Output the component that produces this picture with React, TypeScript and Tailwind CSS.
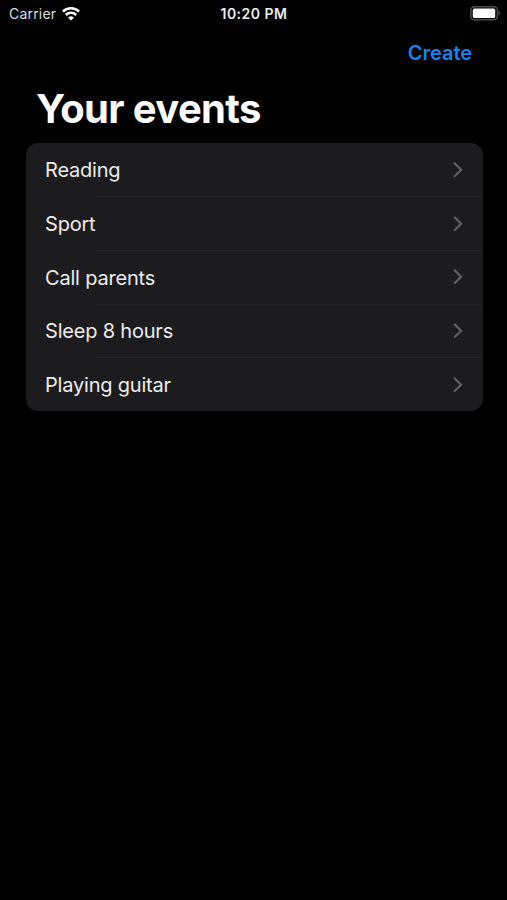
import React from "react";

type TEvent = {
  id: number;
  title: string;
};

const events: TEvent[] = [
  { id: 1, title: "Reading" },
  { id: 2, title: "Sport" },
  { id: 3, title: "Call parents" },
  { id: 4, title: "Sleep 8 hours" },
  { id: 5, title: "Playing guitar" },
];

const WifiIcon = () => (
  <svg width="18" height="14" viewBox="0 0 18 14" fill="none" stroke="#fff" strokeWidth="2.5">
    <path d="M0.9 4.7a11.5 11.5 0 0 1 16.2 0" />
    <path d="M3.8 8a7.4 7.4 0 0 1 10.4 0" />
    <path d="M9 13.6 6.1 10.7a4.1 4.1 0 0 1 5.8 0Z" fill="#fff" stroke="none" />
  </svg>
);

const BatteryIcon = () => (
  <svg width="31" height="15" viewBox="0 0 31 15" fill="none">
    <rect x="0.8" y="0.8" width="26.6" height="13" rx="3.6" stroke="#4c4c4c" strokeWidth="1.5" />
    <rect x="2.8" y="2.6" width="22.4" height="9.4" rx="1.6" fill="#fff" />
    <path d="M28.6 5v4.6c1-.4 1.6-1.3 1.6-2.3s-.6-1.9-1.6-2.3Z" fill="#4c4c4c" />
  </svg>
);

const Chevron = () => (
  <svg width="10" height="16" viewBox="0 0 10 16" fill="none" stroke="#5f5f63" strokeWidth="2.2" strokeLinecap="round" strokeLinejoin="round">
    <path d="M1.7 1.4 8.2 7.7l-6.5 6.3" />
  </svg>
);

const StatusBar = () => (
  <div className="grid grid-cols-3 items-center h-[27px] pl-[9px] pr-[6px] text-white">
    <div className="flex items-center gap-[6px]">
      <span className="text-[14px] tracking-[0.2px] text-[#dedede]">Carrier</span>
      <WifiIcon />
    </div>
    <span className="-ml-[2px] pt-px text-center text-[14px] leading-5 tracking-[0.5px] font-semibold text-[#ededed] whitespace-nowrap">
      10:20 PM
    </span>
    <div className="flex justify-end">
      <BatteryIcon />
    </div>
  </div>
);

const EventRow = ({ title, isFirst }: { title: string; isFirst: boolean }) => (
  <li className="flex flex-col h-[53.7px]">
    <div className={`h-px ml-[70px] ${isFirst ? "" : "bg-[#272729]"}`} />
    <button className="flex flex-1 items-center justify-between pl-[19.5px] pr-[20px] text-left cursor-pointer">
      <span className="pt-[0.6px] text-[20px] leading-6 tracking-[-0.2px] text-[#ececec]">{title}</span>
      <Chevron />
    </button>
  </li>
);

const App = () => {
  return (
    <div className="min-h-screen bg-black font-['Inter',sans-serif]">
      <StatusBar />

      <nav className="flex justify-end h-[52px] items-center pr-[35px]">
        <button className="text-[20px] leading-[30px] font-semibold tracking-[-0.05px] text-[#1a82ea] cursor-pointer">Create</button>
      </nav>

      <h1 className="h-[63.5px] pl-[36px] pt-[5px] text-[40px] leading-[50px] tracking-[-0.65px] font-bold text-white">
        Your events
      </h1>

      <ul className="ml-[25.5px] w-[457px] overflow-hidden rounded-[12px] bg-[#1c1c1e]">
        {events.map((event, index) => (
          <EventRow key={event.id} title={event.title} isFirst={index === 0} />
        ))}
      </ul>
    </div>
  );
};

export default App;
